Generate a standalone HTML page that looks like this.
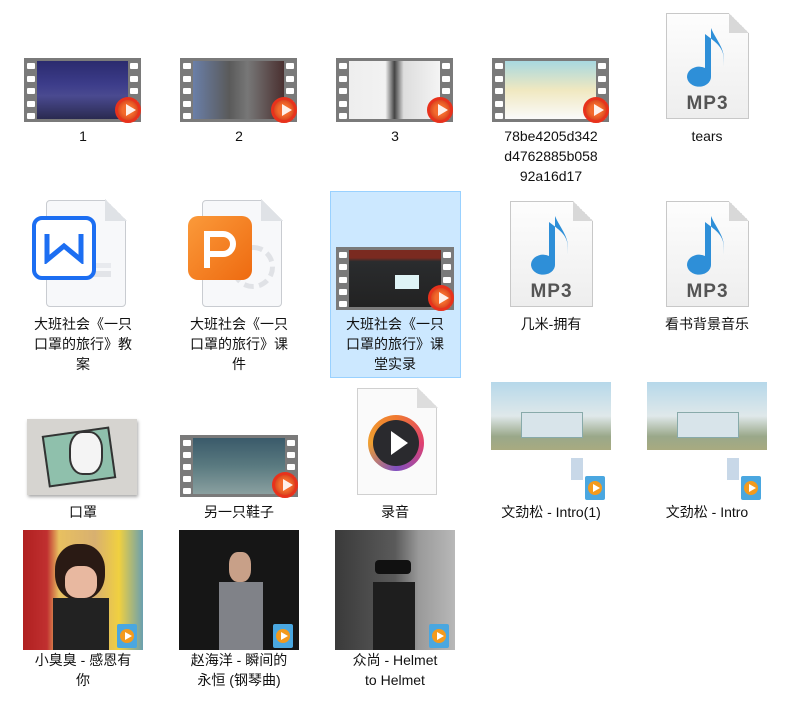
<!DOCTYPE html>
<html><head><meta charset="utf-8"><style>
*{margin:0;padding:0;box-sizing:border-box}
body{width:798px;height:709px;background:#fff;position:relative;overflow:hidden;font-family:"Liberation Sans","Noto Sans CJK SC",sans-serif;font-size:14px;color:#111}
.a{position:absolute}
.lbl{position:absolute;width:130px;text-align:center;line-height:20px;font-size:14px}
.film{position:absolute;width:117px;height:64px;background:#7a7a7a}
.film .in{position:absolute;left:13px;right:13px;top:3px;bottom:3px}
.film .h{position:absolute;width:8px;height:6px;background:#fff;border-radius:1px}
.play{position:absolute;width:26px;height:26px;border-radius:50%;border:3px solid #e8321c;background:radial-gradient(circle,#f36a2c 40%,#c42a14 100%)}
.play:after{content:"";position:absolute;left:8px;top:4px;border-left:10px solid #fff;border-top:6px solid transparent;border-bottom:6px solid transparent;opacity:.9}
.doc{position:absolute;background:#f7f8fa;border:1.5px solid #c9ccd1;border-radius:4px}
.doc:after{content:"";position:absolute;right:-2px;top:-2px;width:22px;height:22px;background:linear-gradient(225deg,#fff 50%,#dfe2e6 50%)}
.mp3{position:absolute;width:83px;height:106px;background:linear-gradient(#fdfdfd,#eee);border:1px solid #c8c8c8}
.mp3:before{content:"";position:absolute;right:-1px;top:-1px;width:20px;height:20px;background:linear-gradient(225deg,#fff 50%,#d8d8d8 50%)}
.mp3 .t{position:absolute;left:0;right:0;top:79px;text-align:center;font-weight:bold;font-size:19px;color:#555;letter-spacing:1px}
.badge{position:absolute;width:20px;height:24px;background:#4aa7e0;border-radius:2px}
.badge:before{content:"";position:absolute;left:3px;top:5px;width:14px;height:14px;border-radius:50%;background:#f39a1d}
.badge:after{content:"";position:absolute;left:8px;top:8px;border-left:7px solid #fff;border-top:4px solid transparent;border-bottom:4px solid transparent}
</style></head><body>

<!-- row1 videos -->
<div class="film" style="left:24px;top:58px"><div class="in" style="background:linear-gradient(#2b2b6e,#3c3c8a 40%,#4a4a90 60%,#2a2a50)"></div></div>
<div class="film" style="left:180px;top:58px"><div class="in" style="background:linear-gradient(90deg,#6a7fa8,#5a5a5a 40%,#777 60%,#4a3030)"></div></div>
<div class="film" style="left:336px;top:58px"><div class="in" style="background:linear-gradient(90deg,#eee,#f2f2f2 40%,#444 50%,#ddd 60%,#f4f4f4)"></div></div>
<div class="film" style="left:492px;top:58px"><div class="in" style="background:linear-gradient(#a8d8e0,#f0e8c0 50%,#fafafa)"></div></div>
<div class="play" style="left:115px;top:97px"></div>
<div class="play" style="left:271px;top:97px"></div>
<div class="play" style="left:427px;top:97px"></div>
<div class="play" style="left:583px;top:97px"></div>
<div class="lbl" style="left:18px;top:126px">1</div>
<div class="lbl" style="left:174px;top:126px">2</div>
<div class="lbl" style="left:330px;top:126px">3</div>
<div class="lbl" style="left:486px;top:126px">78be4205d342<br>d4762885b058<br>92a16d17</div>

<div class="mp3" style="left:666px;top:13px"><svg class="a" style="left:20px;top:12px" width="44" height="68" viewBox="0 0 44 68"><path d="M24 2 V50 A12 10 0 1 1 18 42 V8 C28 16 40 22 36 40 C40 24 30 16 24 2Z" fill="#2e8fd8"/></svg><div class="t">MP3</div></div>
<div class="lbl" style="left:642px;top:126px">tears</div>

<!-- row2 -->
<div class="doc" style="left:46px;top:200px;width:80px;height:107px"><div class="a" style="left:12px;top:70px;width:52px;height:6px;background:#e2e4e8"></div><div class="a" style="left:32px;top:62px;width:32px;height:5px;background:#e8eaee"></div></div>
<div class="a" style="left:32px;top:216px;width:64px;height:64px;border:4px solid #1c6ef2;border-radius:10px;background:#fff"></div>
<svg class="a" style="left:44px;top:232px" width="40" height="32"><path d="M3 2 V28 L20 14 L37 28 V2" fill="none" stroke="#1c6ef2" stroke-width="5"/></svg>
<div class="doc" style="left:202px;top:200px;width:80px;height:107px"><div class="a" style="left:28px;top:44px;width:44px;height:44px;border-radius:50%;border:5px dashed #e0e2e6"></div></div>
<div class="a" style="left:188px;top:216px;width:64px;height:64px;border-radius:10px;background:linear-gradient(135deg,#fb9a3a,#ee6a10)"></div>
<svg class="a" style="left:203px;top:230px" width="36" height="40"><path d="M4 38 V4 H20 A10 10 0 0 1 20 24 H4" fill="none" stroke="#fff" stroke-width="6"/></svg>

<div class="a" style="left:330px;top:191px;width:131px;height:187px;background:#cce8ff;border:1px solid #99d1ff"></div>
<div class="film" style="left:336px;top:247px;width:118px;height:63px"><div class="in" style="background:linear-gradient(#7a2a20 0,#7a2a20 14%,#2a2c2e 20%,#222 100%)"><div class="a" style="left:46px;top:25px;width:24px;height:14px;background:#dff4f6"></div></div></div>
<div class="play" style="left:428px;top:285px"></div>

<div class="lbl" style="left:18px;top:314px">大班社会《一只<br>口罩的旅行》教<br>案</div>
<div class="lbl" style="left:174px;top:314px">大班社会《一只<br>口罩的旅行》课<br>件</div>
<div class="lbl" style="left:330px;top:314px">大班社会《一只<br>口罩的旅行》课<br>堂实录</div>

<div class="mp3" style="left:510px;top:201px"><svg class="a" style="left:20px;top:12px" width="44" height="68" viewBox="0 0 44 68"><path d="M24 2 V50 A12 10 0 1 1 18 42 V8 C28 16 40 22 36 40 C40 24 30 16 24 2Z" fill="#2e8fd8"/></svg><div class="t">MP3</div></div>
<div class="mp3" style="left:666px;top:201px"><svg class="a" style="left:20px;top:12px" width="44" height="68" viewBox="0 0 44 68"><path d="M24 2 V50 A12 10 0 1 1 18 42 V8 C28 16 40 22 36 40 C40 24 30 16 24 2Z" fill="#2e8fd8"/></svg><div class="t">MP3</div></div>
<div class="lbl" style="left:486px;top:314px">几米-拥有</div>
<div class="lbl" style="left:642px;top:314px">看书背景音乐</div>

<!-- row3 -->
<div class="a" style="left:27px;top:419px;width:110px;height:76px;background:#d6d4d0;box-shadow:1px 2px 3px #aaa"><div class="a" style="left:18px;top:12px;width:68px;height:52px;background:#8fc0ac;border:2px solid #333;transform:rotate(-8deg)"></div><div class="a" style="left:42px;top:12px;width:34px;height:44px;background:#f4f4f4;border:2px solid #333;border-radius:40%"></div></div>
<div class="film" style="left:180px;top:435px;width:118px;height:62px"><div class="in" style="background:linear-gradient(#3a5a6a,#5a7a80 50%,#8aa0a0)"></div></div>
<div class="play" style="left:272px;top:472px"></div>
<div class="a" style="left:357px;top:388px;width:80px;height:107px;background:#fafafa;border:1px solid #d0d0d0"></div>
<div class="a" style="left:417px;top:387px;width:21px;height:21px;background:linear-gradient(225deg,#fff 50%,#ddd 50%)"></div>
<div class="a" style="left:368px;top:415px;width:56px;height:56px;border-radius:50%;background:conic-gradient(#f07a30,#e04070,#8050c0,#f0a030,#f07a30)"></div>
<div class="a" style="left:373px;top:420px;width:46px;height:46px;border-radius:50%;background:#2a2a2e"></div>
<div class="a" style="left:391px;top:431px;border-left:17px solid #fff;border-top:12px solid transparent;border-bottom:12px solid transparent"></div>

<div class="a" style="left:491px;top:382px;width:120px;height:118px;background:#fff"><div class="a" style="left:0;top:0;width:120px;height:68px;background:linear-gradient(#b6d8ea,#dfe8ea 50%,#9aa88a 80%,#a8aa80)"><div class="a" style="left:30px;top:30px;width:62px;height:26px;background:#d8e4ea;border:1px solid #8aa"></div></div><div class="a" style="left:80px;top:76px;width:12px;height:22px;background:#c8d8e8"></div></div>
<div class="badge" style="left:585px;top:476px"></div>
<div class="a" style="left:647px;top:382px;width:120px;height:118px;background:#fff"><div class="a" style="left:0;top:0;width:120px;height:68px;background:linear-gradient(#b6d8ea,#dfe8ea 50%,#9aa88a 80%,#a8aa80)"><div class="a" style="left:30px;top:30px;width:62px;height:26px;background:#d8e4ea;border:1px solid #8aa"></div></div><div class="a" style="left:80px;top:76px;width:12px;height:22px;background:#c8d8e8"></div></div>
<div class="badge" style="left:741px;top:476px"></div>

<div class="lbl" style="left:18px;top:502px">口罩</div>
<div class="lbl" style="left:174px;top:502px">另一只鞋子</div>
<div class="lbl" style="left:330px;top:502px">录音</div>
<div class="lbl" style="left:486px;top:502px">文劲松 - Intro(1)</div>
<div class="lbl" style="left:642px;top:502px">文劲松 - Intro</div>

<!-- row4 -->
<div class="a" style="left:23px;top:530px;width:120px;height:120px;background:linear-gradient(90deg,#b02020 0,#c03030 20%,#e8c060 30%,#d8b070 60%,#f0d040 80%,#6aa0b0)"><div class="a" style="left:32px;top:14px;width:50px;height:56px;border-radius:45%;background:#2a1a14"></div><div class="a" style="left:42px;top:36px;width:32px;height:32px;border-radius:40%;background:#e8b8a0"></div><div class="a" style="left:30px;top:68px;width:56px;height:52px;background:#222"></div></div>
<div class="badge" style="left:117px;top:624px"></div>
<div class="a" style="left:179px;top:530px;width:120px;height:120px;background:#161616"><div class="a" style="left:40px;top:52px;width:44px;height:68px;background:#808288"></div><div class="a" style="left:50px;top:22px;width:22px;height:30px;border-radius:40%;background:#c8a088"></div></div>
<div class="badge" style="left:273px;top:624px"></div>
<div class="a" style="left:335px;top:530px;width:120px;height:120px;background:linear-gradient(90deg,#3a3a3a,#5a5a5a 50%,#9a9a9a 70%,#b8b8b8)"><div class="a" style="left:38px;top:52px;width:42px;height:68px;background:#1e1e1e"></div><div class="a" style="left:40px;top:30px;width:36px;height:14px;background:#111;border-radius:4px"></div></div>
<div class="badge" style="left:429px;top:624px"></div>

<div class="lbl" style="left:18px;top:650px">小臭臭 - 感恩有<br>你</div>
<div class="lbl" style="left:174px;top:650px">赵海洋 - 瞬间的<br>永恒 (钢琴曲)</div>
<div class="lbl" style="left:330px;top:650px">众尚 - Helmet<br>to Helmet</div>

<script>
document.querySelectorAll('.film').forEach(f=>{var h=f.offsetHeight;for(var i=0;i<5;i++){['3px',''].forEach((l,j)=>{var d=document.createElement('div');d.className='h';d.style.top=(5+i*(h-14)/4)+'px';if(j==0)d.style.left='3px';else d.style.right='3px';f.appendChild(d);});}});
</script>
</body></html>
